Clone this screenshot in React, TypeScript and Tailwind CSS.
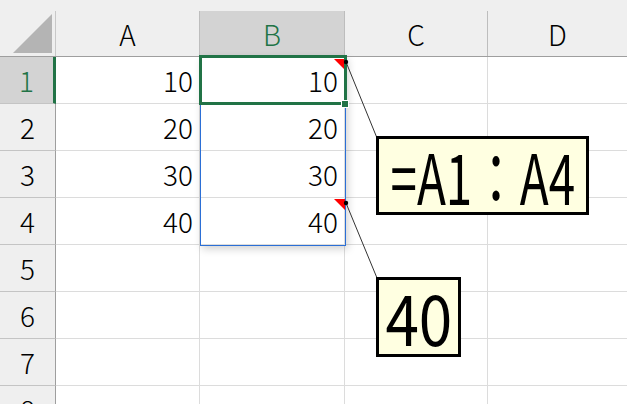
import React from "react";

const cols = [
  { name: "A", w: "w-[144px]" },
  { name: "B", w: "w-[145px]" },
  { name: "C", w: "w-[143px]" },
  { name: "D", w: "w-[140px]" },
];

const values: Record<number, string> = { 1: "10", 2: "20", 3: "30", 4: "40" };

const font = { fontFamily: '"Noto Sans CJK JP", "Noto Sans", sans-serif' };

export default function App() {
  const rows = [1, 2, 3, 4, 5, 6, 7, 8];
  return (
    <div
      className="relative w-[627px] h-[404px] overflow-hidden bg-white text-black"
      style={font}
    >
      {/* header */}
      <div className="h-[57px] bg-[#efefef] flex flex-col border-b border-[#9e9e9e]">
        <div className="h-[11px]" />
        <div className="flex flex-1">
          <div className="w-[56px] shrink-0 flex items-end justify-end pr-[3px] pb-[3px] border-r border-[#c8c8c8]">
            <div className="w-[39px] h-[39px] bg-[#b4b4b4] [clip-path:polygon(100%_0,100%_100%,0_100%)]" />
          </div>
          {cols.map((c) => (
            <div
              key={c.name}
              className={`${c.w} shrink-0 flex items-center justify-center text-[28px] font-light leading-none border-r border-[#bdbdbd] ${
                c.name === "B" ? "bg-[#d3d3d3] text-[#217346]" : ""
              }`}
            >
              {c.name}
            </div>
          ))}
        </div>
      </div>

      {rows.map((r) => (
        <div key={r} className="flex h-[47px]">
          <div
            className={`w-[56px] shrink-0 flex items-center justify-center text-[28px] font-light leading-none border-b border-[#c4c4c4] ${
              r === 1
                ? "bg-[#d3d3d3] text-[#217346] border-r-[3px] border-r-[#217346]"
                : "bg-[#efefef] border-r border-r-[#9e9e9e]"
            }`}
          >
            {r}
          </div>
          {cols.map((c) => (
            <div
              key={c.name}
              className={`${c.w} shrink-0 flex items-center justify-end pr-[6px] text-[28px] font-light leading-none border-r border-b border-[#dcdcdc]`}
            >
              {(c.name === "A" || c.name === "B") && values[r]}
            </div>
          ))}
        </div>
      ))}

      {/* selection B1:B4 */}
      <div className="absolute left-[200px] top-[56px] w-[146px] h-[190px] border border-[#2b6fd6] shadow-[2px_3px_8px_rgba(0,0,0,0.18)]" />
      <div className="absolute left-[199px] top-[55px] w-[148px] h-[50px] border-[3px] border-[#217346]" />
      <div className="absolute left-[341px] top-[100px] w-[8px] h-[8px] bg-[#217346] border border-white" />

      {/* red comment marks */}
      <div className="absolute left-[334px] top-[59px] w-[10px] h-[10px] bg-[#ff0000] [clip-path:polygon(0_0,100%_0,100%_100%)]" />
      <div className="absolute left-[334px] top-[199px] w-[11px] h-[11px] bg-[#ff0000] [clip-path:polygon(0_0,100%_0,100%_100%)]" />

      {/* leader lines */}
      <svg className="absolute left-0 top-0" width="627" height="404">
        <line x1="346" y1="62" x2="377" y2="138" stroke="#333" strokeWidth="1" />
        <line x1="346" y1="203" x2="377" y2="278" stroke="#333" strokeWidth="1" />
        <circle cx="346" cy="62" r="2.2" fill="#000" />
        <circle cx="346" cy="203" r="2.2" fill="#000" />
      </svg>

      {/* callouts */}
      <div className="absolute left-[376px] top-[136px] w-[213px] h-[79px] bg-[#ffffe1] border-[3px] border-black flex items-center justify-center">
        <span className="inline-block text-[70px] leading-none scale-x-[0.68] whitespace-nowrap -mx-[40px] pb-[2px]">
          =A1：A4
        </span>
      </div>
      <div className="absolute left-[376px] top-[277px] w-[85px] h-[80px] bg-[#ffffe1] border-[3px] border-black flex items-center justify-center">
        <span className="inline-block text-[70px] leading-none scale-x-[0.86] whitespace-nowrap -mx-[10px] pb-[2px]">
          40
        </span>
      </div>
    </div>
  );
}
